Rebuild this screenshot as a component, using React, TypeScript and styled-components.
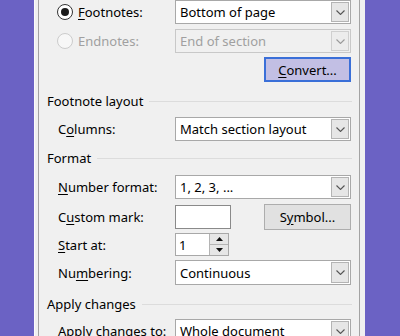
import styled, { createGlobalStyle } from "styled-components";

const GlobalStyle = createGlobalStyle`
  html, body {
    margin: 0;
    padding: 0;
    background: #6b62c4;
  }
  body {
    font-family: "Segoe UI", "Noto Sans", sans-serif;
    font-size: 13px;
    color: #000;
  }
`;

const Page = styled.div`
  width: 400px;
  height: 336px;
  overflow: hidden;
  background: #6b62c4;
  display: flex;
`;

const Frame = styled.div`
  margin-left: 34px;
  width: 331px;
  height: 100%;
  box-sizing: border-box;
  background: #f0f0f0;
  border-left: 1px solid #fbfbfb;
  padding: 0 5px 0 3px;
  display: flex;
`;

const Panel = styled.div`
  flex: 1;
  border-left: 1px solid #a3a3a3;
  border-right: 1px solid #a3a3a3;
  display: flex;
  flex-direction: column;

  & > * {
    flex-shrink: 0;
  }
`;

const Row = styled.div<{ $top: number; $h?: number }>`
  display: grid;
  grid-template-columns: 117px 176px;
  align-items: center;
  padding-left: 19px;
  margin-top: ${(p) => p.$top}px;
  height: ${(p) => p.$h ?? 24}px;
`;

const Label = styled.span<{ $disabled?: boolean }>`
  color: ${(p) => (p.$disabled ? "#a0a0a0" : "#000")};
  white-space: nowrap;
`;

const Key = styled.span`
  text-decoration: underline;
  text-underline-offset: 2px;
`;

const RadioLabel = styled.label<{ $disabled?: boolean }>`
  display: flex;
  align-items: center;
  gap: 5px;
  margin-left: -1px;
  color: ${(p) => (p.$disabled ? "#a0a0a0" : "#000")};
  white-space: nowrap;
`;

const Radio = styled.span<{ $checked?: boolean; $disabled?: boolean }>`
  width: 16px;
  height: 16px;
  box-sizing: border-box;
  border-radius: 50%;
  border: 1px solid ${(p) => (p.$disabled ? "#cccccc" : "#333")};
  background: ${(p) => (p.$disabled ? "#f7f7f7" : "#fff")};
  display: flex;
  align-items: center;
  justify-content: center;

  &::after {
    content: "";
    width: 8px;
    height: 8px;
    border-radius: 50%;
    background: #1a1a1a;
    display: ${(p) => (p.$checked ? "block" : "none")};
  }
`;

const Combo = styled.div<{ $disabled?: boolean }>`
  height: 100%;
  box-sizing: border-box;
  border: 1px solid ${(p) => (p.$disabled ? "#c8c8c8" : "#a8a8a8")};
  background: ${(p) => (p.$disabled ? "#f0f0f0" : "#fff")};
  color: ${(p) => (p.$disabled ? "#a0a0a0" : "#000")};
  display: flex;
  align-items: center;
  padding-left: 4px;
  white-space: nowrap;
`;

const Arrow = styled.span<{ $disabled?: boolean }>`
  margin-left: auto;
  margin-right: 1px;
  width: 18px;
  height: calc(100% - 2px);
  box-sizing: border-box;
  border: 1px solid ${(p) => (p.$disabled ? "#cfcfcf" : "#b4b4b4")};
  background: ${(p) => (p.$disabled ? "#ececec" : "#e6e6e6")};
  display: flex;
  align-items: center;
  justify-content: center;
`;

const Header = styled.div<{ $top: number }>`
  display: flex;
  align-items: center;
  height: 20px;
  margin-top: ${(p) => p.$top}px;
  padding: 0 7px 0 8px;
  white-space: nowrap;

  &::after {
    content: "";
    flex: 1;
    height: 1px;
    margin-left: 6px;
    background: #dcdcdc;
  }
`;

const ButtonRow = styled.div<{ $top: number }>`
  display: flex;
  justify-content: flex-end;
  padding-right: 8px;
  margin-top: ${(p) => p.$top}px;
`;

const Button = styled.button<{ $focused?: boolean }>`
  width: 87px;
  height: ${(p) => (p.$focused ? 25 : 26)}px;
  box-sizing: border-box;
  font: inherit;
  color: #000;
  border: 1px solid ${(p) => (p.$focused ? "#3a6fd8" : "#adadad")};
  box-shadow: ${(p) => (p.$focused ? "inset 0 0 0 1px #3a6fd8" : "none")};
  background: ${(p) => (p.$focused ? "#c2bfe4" : "#e1e1e1")};
  padding: 0;
  justify-self: end;
`;

const ControlLine = styled.div`
  display: flex;
  justify-content: space-between;
  align-items: center;
  height: 100%;
`;

const TextBox = styled.div<{ $w: number }>`
  width: ${(p) => p.$w}px;
  height: 24px;
  box-sizing: border-box;
  border: 1px solid #8a8a8a;
  background: #fff;
  display: flex;
  align-items: center;
  padding-left: 4px;
`;

const SpinBox = styled.div`
  width: 54px;
  height: 23px;
  box-sizing: border-box;
  border: 1px solid #a8a8a8;
  background: #fff;
  display: flex;
  align-items: center;
  padding-left: 3px;
`;

const SpinButtons = styled.div`
  margin-left: auto;
  width: 19px;
  height: 100%;
  display: flex;
  flex-direction: column;
`;

const SpinButton = styled.span`
  flex: 1;
  border-left: 1px solid #b4b4b4;
  border-top: 1px solid #b4b4b4;
  background: #e6e6e6;
  display: flex;
  align-items: center;
  justify-content: center;

  &:first-child {
    border-top: none;
  }
`;

function Chevron({ disabled }: { disabled?: boolean }) {
  return (
    <svg width="9" height="5" viewBox="0 0 9 5">
      <polyline
        points="0.5,0.5 4.5,4.5 8.5,0.5"
        fill="none"
        stroke={disabled ? "#9a9a9a" : "#555"}
        strokeWidth="1.1"
      />
    </svg>
  );
}

function Dropdown({ value, disabled }: { value: string; disabled?: boolean }) {
  return (
    <Combo $disabled={disabled}>
      {value}
      <Arrow $disabled={disabled}>
        <Chevron disabled={disabled} />
      </Arrow>
    </Combo>
  );
}

function Tri({ up }: { up?: boolean }) {
  return (
    <svg width="7" height="4" viewBox="0 0 7 4">
      <polygon points={up ? "0,4 3.5,0 7,4" : "0,0 3.5,4 7,0"} fill="#111" />
    </svg>
  );
}

export default function App() {
  return (
    <Page>
      <GlobalStyle />
      <Frame>
        <Panel>
          <Row $top={0}>
            <RadioLabel>
              <Radio $checked />
              <span>
                <Key>F</Key>ootnotes:
              </span>
            </RadioLabel>
            <Dropdown value="Bottom of page" />
          </Row>
          <Row $top={5}>
            <RadioLabel $disabled>
              <Radio $disabled />
              <span>Endnotes:</span>
            </RadioLabel>
            <Dropdown value="End of section" disabled />
          </Row>
          <ButtonRow $top={4}>
            <Button $focused>
              <Key>C</Key>onvert...
            </Button>
          </ButtonRow>

          <Header $top={9}>Footnote layout</Header>
          <Row $top={6}>
            <Label>
              C<Key>o</Key>lumns:
            </Label>
            <Dropdown value="Match section layout" />
          </Row>

          <Header $top={7}>Format</Header>
          <Row $top={7}>
            <Label>
              <Key>N</Key>umber format:
            </Label>
            <Dropdown value="1, 2, 3, ..." />
          </Row>
          <Row $top={5}>
            <Label>
              C<Key>u</Key>stom mark:
            </Label>
            <ControlLine>
              <TextBox $w={56} />
              <Button>
                S<Key>y</Key>mbol...
              </Button>
            </ControlLine>
          </Row>
          <Row $top={5} $h={23}>
            <Label>
              <Key>S</Key>tart at:
            </Label>
            <ControlLine>
              <SpinBox>
                1
                <SpinButtons>
                  <SpinButton>
                    <Tri up />
                  </SpinButton>
                  <SpinButton>
                    <Tri />
                  </SpinButton>
                </SpinButtons>
              </SpinBox>
            </ControlLine>
          </Row>
          <Row $top={4} $h={25}>
            <Label>
              Nu<Key>m</Key>bering:
            </Label>
            <Dropdown value="Continuous" />
          </Row>

          <Header $top={9}>Apply changes</Header>
          <Row $top={5}>
            <Label>
              A<Key>p</Key>ply changes to:
            </Label>
            <Dropdown value="Whole document" />
          </Row>
        </Panel>
      </Frame>
    </Page>
  );
}
